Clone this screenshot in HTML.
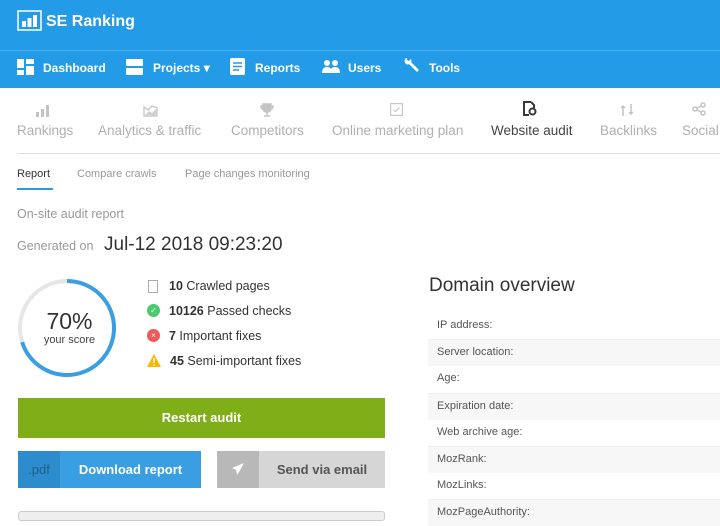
<!DOCTYPE html><html><head><style>
*{margin:0;padding:0;box-sizing:border-box}
body{width:720px;height:518px;overflow:hidden;background:#fff;font-family:"Liberation Sans",sans-serif;position:relative}
.a{position:absolute;white-space:nowrap}
</style></head><body>
<div class="a" style="left:0;top:0;width:720px;height:88px;background:#239be6"></div>
<div class="a" style="left:0;top:50px;width:720px;height:1px;background:#4db0ee"></div>
<svg class="a" style="left:17px;top:10px" width="25" height="21"><rect x="1" y="1" width="23" height="19" fill="none" stroke="#fff" stroke-width="1.5"/><rect x="5" y="11" width="4" height="6" fill="#fff"/><rect x="10.5" y="8" width="4" height="9" fill="#fff"/><rect x="16" y="5" width="4" height="12" fill="#fff"/></svg>
<div class="a" style="left:46px;top:13px;color:#fff;font-size:16px;font-weight:bold">SE Ranking</div>
<div style="color:#fff;font-size:12px;font-weight:bold">
<svg class="a" style="left:17px;top:59px" width="17" height="16" fill="#fff"><rect x="0" y="0" width="7" height="9"/><rect x="9" y="0" width="8" height="5"/><rect x="0" y="11" width="7" height="5"/><rect x="9" y="7" width="8" height="9"/></svg>
<div class="a" style="left:43px;top:61px">Dashboard</div>
<svg class="a" style="left:126px;top:59px" width="17" height="16" fill="#fff"><rect x="0" y="0" width="17" height="7" rx="1"/><rect x="0" y="9" width="17" height="7" rx="1"/></svg>
<div class="a" style="left:153px;top:61px">Projects ▾</div>
<svg class="a" style="left:230px;top:58px" width="15" height="17"><rect width="15" height="17" rx="2" fill="#fff"/><path d="M3 5h9M3 8.5h9M3 12h6" stroke="#239be6" stroke-width="1.5"/></svg>
<div class="a" style="left:255px;top:61px">Reports</div>
<svg class="a" style="left:322px;top:60px" width="18" height="13" fill="#fff"><circle cx="5" cy="3" r="3"/><circle cx="13" cy="3" r="3"/><path d="M0 13q0-6 5-6t5 6zM8 13q0-6 5-6t5 6z"/></svg>
<div class="a" style="left:348px;top:61px">Users</div>
<svg class="a" style="left:403px;top:57px" width="17" height="17"><path d="M3 1q-3 3 0 6q2 1 3 0l8 8 2-2-8-8q1-1 0-3l-2 2-2-1 0-2z" fill="#fff"/></svg>
<div class="a" style="left:429px;top:61px">Tools</div>
</div>
<div style="color:#b0b0b0;font-size:13.5px">
<div class="a" style="left:17px;top:123px">Rankings</div>
<div class="a" style="left:98px;top:123px">Analytics &amp; traffic</div>
<div class="a" style="left:231px;top:123px">Competitors</div>
<div class="a" style="left:332px;top:123px">Online marketing plan</div>
<div class="a" style="left:491px;top:123px;color:#444">Website audit</div>
<div class="a" style="left:600px;top:123px">Backlinks</div>
<div class="a" style="left:682px;top:123px">Social</div>
</div>
<svg class="a" style="left:36px;top:104px" width="14" height="13" fill="#c4c4c4"><rect x="0" y="8" width="3" height="5"/><rect x="5" y="5" width="3" height="8"/><rect x="10" y="1" width="3" height="12"/></svg>
<svg class="a" style="left:143px;top:104px" width="15" height="13"><path d="M1 12V3l4 3 4-4 5 2v8z" fill="none" stroke="#c4c4c4" stroke-width="1.3"/><path d="M1 12l5-5 3 2 5-5v8z" fill="#d0d0d0"/></svg>
<svg class="a" style="left:260px;top:103px" width="14" height="14" fill="none" stroke="#c4c4c4" stroke-width="1.5"><path d="M3 1h8v4q0 4-4 4t-4-4z" fill="#c4c4c4"/><path d="M3 3H1q0 3 2 3M11 3h2q0 3-2 3M7 9v3M4 13h6"/></svg>
<svg class="a" style="left:390px;top:103px" width="13" height="13" fill="none" stroke="#c8c8c8" stroke-width="1.2"><rect x="0.6" y="0.6" width="11.8" height="11.8"/><path d="M3.5 6.5l2 2 4-4"/></svg>
<svg class="a" style="left:522px;top:101px" width="15" height="15" fill="none" stroke="#3a3a3a" stroke-width="2"><path d="M9 1H2v13h5"/><path d="M9 1l3 3v3"/><circle cx="10.5" cy="10.5" r="3"/></svg>
<svg class="a" style="left:620px;top:103px" width="14" height="14" fill="none" stroke="#c4c4c4" stroke-width="1.5"><path d="M3 13V3M1 5l2-2 2 2M11 1v10M9 9l2 2 2-2"/></svg>
<svg class="a" style="left:692px;top:102px" width="14" height="14" fill="none" stroke="#c4c4c4" stroke-width="1.5"><circle cx="11" cy="3" r="2"/><circle cx="3" cy="7" r="2"/><circle cx="11" cy="11" r="2"/><path d="M5 6l4-2M5 8l4 2"/></svg>
<div class="a" style="left:17px;top:153px;width:703px;height:1px;background:#ddd"></div>
<div class="a" style="left:17px;top:168px;font-size:11px;color:#333">Report</div>
<div class="a" style="left:17px;top:188px;width:36px;height:2px;background:#2b9ae0"></div>
<div class="a" style="left:77px;top:168px;font-size:11px;color:#999">Compare crawls</div>
<div class="a" style="left:185px;top:168px;font-size:11px;color:#999">Page changes monitoring</div>
<div class="a" style="left:17px;top:207px;font-size:12.5px;color:#999">On-site audit report</div>
<div class="a" style="left:17px;top:239px;font-size:12.5px;color:#999">Generated on</div>
<div class="a" style="left:104px;top:234px;font-size:19px;color:#333">Jul-12 2018 09:23:20</div>
<svg class="a" style="left:17px;top:278px" width="100" height="100"><circle cx="50" cy="50" r="47" fill="none" stroke="#e6e6e6" stroke-width="4"/><circle cx="50" cy="50" r="47" fill="none" stroke="#3a9ee4" stroke-width="4" stroke-dasharray="206.7 300" transform="rotate(-90 50 50)"/></svg>
<div class="a" style="left:17px;top:308px;width:105px;text-align:center;font-size:23px;color:#333">70%</div>
<div class="a" style="left:17px;top:334px;width:105px;text-align:center;font-size:11px;color:#444">your score</div>
<div style="font-size:12.5px;color:#333">
<div class="a" style="left:148px;top:280px;width:10px;height:13px;border:1px solid #aaa"></div>
<div class="a" style="left:169px;top:279px"><b>10</b> Crawled pages</div>
<div class="a" style="left:147px;top:304px;width:13px;height:13px;border-radius:50%;background:#4cc96c;color:#fff;font-size:8px;text-align:center;line-height:13px">✓</div>
<div class="a" style="left:169px;top:304px"><b>10126</b> Passed checks</div>
<div class="a" style="left:147px;top:329px;width:13px;height:13px;border-radius:50%;background:#f0595a;color:#fff;font-size:8px;text-align:center;line-height:13px">×</div>
<div class="a" style="left:169px;top:329px"><b>7</b> Important fixes</div>
<svg class="a" style="left:147px;top:354px" width="14" height="13"><path d="M7 0L14 13H0z" fill="#fbb600"/><path d="M7 4v5M7 10.5v1" stroke="#fff" stroke-width="1.5"/></svg>
<div class="a" style="left:170px;top:354px"><b>45</b> Semi-important fixes</div>
</div>
<div class="a" style="left:18px;top:398px;width:367px;height:40px;background:#7fae19;color:#fff;font-weight:bold;font-size:13px;text-align:center;line-height:40px">Restart audit</div>
<div class="a" style="left:18px;top:451px;width:183px;height:37px;background:#3a9fe2"></div>
<div class="a" style="left:18px;top:451px;width:42px;height:37px;background:#2d8ccc;color:#1e5f8c;font-size:13px;text-align:center;line-height:37px">.pdf</div>
<div class="a" style="left:60px;top:451px;width:141px;height:37px;color:#fff;font-weight:bold;font-size:13px;text-align:center;line-height:37px">Download report</div>
<div class="a" style="left:217px;top:451px;width:168px;height:37px;background:#d6d6d6"></div>
<div class="a" style="left:217px;top:451px;width:42px;height:37px;background:#b8b8b8"></div>
<svg class="a" style="left:231px;top:462px" width="14" height="14"><path d="M13 1L1 6l4 2 1 5 2-3z" fill="#fff"/></svg>
<div class="a" style="left:259px;top:451px;width:126px;height:37px;color:#555;font-weight:bold;font-size:13px;text-align:center;line-height:37px">Send via email</div>
<div class="a" style="left:18px;top:511px;width:367px;height:10px;background:#eee;border:1px solid #ccc;border-radius:3px"></div>
<div class="a" style="left:429px;top:275px;font-size:19px;color:#333">Domain overview</div>
<div style="font-size:11px;color:#555">
<div class="a" style="left:428px;top:313px;width:292px;height:26px;padding:6px 9px">IP address:</div>
<div class="a" style="left:428px;top:339px;width:292px;height:27px;padding:6px 9px;background:#f7f7f7;border-top:1px solid #eee">Server location:</div>
<div class="a" style="left:428px;top:366px;width:292px;height:27px;padding:6px 9px">Age:</div>
<div class="a" style="left:428px;top:393px;width:292px;height:27px;padding:6px 9px;background:#f7f7f7;border-top:1px solid #eee">Expiration date:</div>
<div class="a" style="left:428px;top:420px;width:292px;height:27px;padding:6px 9px">Web archive age:</div>
<div class="a" style="left:428px;top:446px;width:292px;height:27px;padding:6px 9px;background:#f7f7f7;border-top:1px solid #eee">MozRank:</div>
<div class="a" style="left:428px;top:473px;width:292px;height:27px;padding:6px 9px">MozLinks:</div>
<div class="a" style="left:428px;top:499px;width:292px;height:27px;padding:6px 9px;background:#f7f7f7;border-top:1px solid #eee">MozPageAuthority:</div>
</div>
</body></html>
